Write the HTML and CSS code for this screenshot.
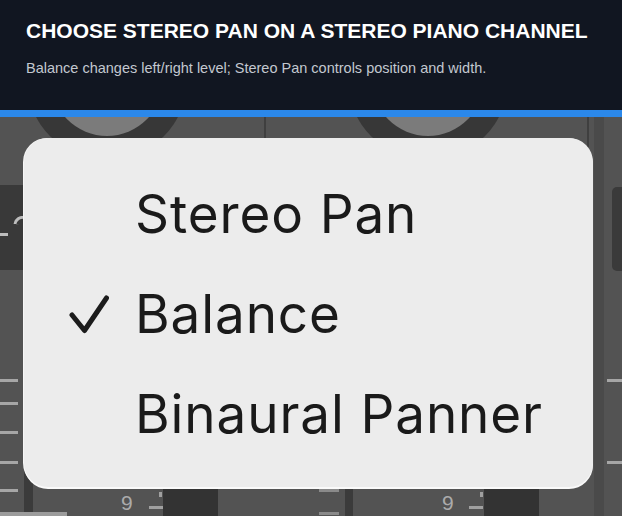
FILE: index.html
```html
<!DOCTYPE html>
<html lang="en">
<head>
<meta charset="utf-8">
<title>Choose Stereo Pan on a stereo piano channel</title>
<link rel="stylesheet" href="styles.css">
</head>
<body>
<header class="header">
  <h1 class="title">CHOOSE STEREO PAN ON A STEREO PIANO CHANNEL</h1>
  <p class="subtitle">Balance changes left/right level; Stereo Pan controls position and width.</p>
</header>
<div class="accent"></div>
<main class="mixer">
  <div class="deco knob knob-a"></div>
  <div class="deco knob knob-b"></div>
  <div class="deco divider divider-a"></div>
  <div class="deco divider divider-b"></div>
  <div class="deco left-panel"><span class="panel-tick"></span><span class="panel-curve"></span></div>
  <div class="deco right-panel"></div>
  <div class="deco tick tick-l1"></div>
  <div class="deco tick tick-l2"></div>
  <div class="deco tick tick-l3"></div>
  <div class="deco tick tick-l4"></div>
  <div class="deco tick tick-l5"></div>
  <div class="deco tick tick-r1"></div>
  <div class="deco tick tick-r2"></div>
  <div class="deco edge-left"></div>
  <div class="deco edge-mid"></div>
  <div class="deco edge-right"></div>
  <div class="deco left-bar"></div>
  <div class="deco fader fader-a"></div>
  <div class="deco fader fader-b"></div>
  <div class="deco scale scale-a">9</div>
  <div class="deco scale scale-b">9</div>
  <div class="deco dash dash-a"></div>
  <div class="deco dash dash-b"></div>
  <div class="deco dot dot-a"></div>
  <div class="deco dot dot-b"></div>
  <div class="deco tick tick-m1"></div>
  <div class="deco tick tick-m2"></div>

  <ul class="menu">
    <li class="item"><span class="check"></span><span class="label">Stereo Pan</span></li>
    <li class="item"><span class="check"><svg width="40" height="40" viewBox="0 0 40 40"><path d="M3 21 L15.5 36.5 L37.5 4" fill="none" stroke="#1c1c1c" stroke-width="5" stroke-linecap="round" stroke-linejoin="round"/></svg></span><span class="label">Balance</span></li>
    <li class="item"><span class="check"></span><span class="label">Binaural Panner</span></li>
  </ul>
</main>
</body>
</html>
```

FILE: styles.css
```css
* { box-sizing: border-box; }
html, body { margin: 0; padding: 0; }
body {
  width: 622px;
  height: 516px;
  overflow: hidden;
  background: #525252;
  font-family: "Liberation Sans", Arial, sans-serif;
}
.header {
  height: 110px;
  background: #111621;
  padding: 18px 26px 0;
}
.title {
  margin: 0;
  font-size: 21px;
  line-height: 25px;
  font-weight: 700;
  color: #ffffff;
}
.subtitle {
  margin: 16px 0 0;
  font-size: 14.5px;
  line-height: 18px;
  color: #c3c8d0;
}
.accent {
  height: 7px;
  background: #2b88ea;
}
.mixer {
  position: relative;
  height: 399px;
  overflow: hidden;
  background: #535353;
  padding: 21px 29px 0 24px;
}
.deco { position: absolute; }
.knob {
  width: 160px;
  height: 160px;
  top: -117px;
  border-radius: 50%;
  background: #373737;
}
.knob::after {
  content: "";
  position: absolute;
  left: 24px;
  top: 24px;
  width: 112px;
  height: 112px;
  border-radius: 50%;
  background: #7b7b7b;
}
.knob-a { left: 27px; }
.knob-b { left: 348px; }
.divider {
  top: 0;
  width: 2px;
  height: 30px;
  background: #3f3f3f;
}
.divider-a { left: 264px; }
.divider-b { left: 587px; }
.left-panel {
  left: 0;
  top: 68px;
  width: 26px;
  height: 85px;
  background: #393939;
}
.panel-tick {
  position: absolute;
  left: 0;
  top: 48px;
  width: 8px;
  height: 3px;
  background: #bdbdbd;
}
.panel-curve {
  position: absolute;
  left: 14px;
  top: 30px;
  width: 10px;
  height: 10px;
  border-top: 3px solid #bdbdbd;
  border-left: 3px solid #bdbdbd;
  border-top-left-radius: 10px;
  transform: rotate(10deg);
}
.right-panel {
  left: 612px;
  top: 70px;
  width: 12px;
  height: 84px;
  border-radius: 5px 0 0 5px;
  background: #3a3a3a;
}
.tick {
  height: 3px;
  background: #a6a6a6;
}
.tick-l1 { left: 0; top: 262px; width: 18px; }
.tick-l2 { left: 0; top: 285px; width: 18px; }
.tick-l3 { left: 0; top: 314px; width: 18px; }
.tick-l4 { left: 0; top: 344px; width: 18px; }
.tick-l5 { left: 0; top: 372px; width: 18px; }
.tick-r1 { left: 607px; top: 262px; width: 15px; }
.tick-r2 { left: 607px; top: 344px; width: 15px; }
.tick-m1 { left: 319px; top: 372px; width: 20px; background: #8a8a8a; }
.tick-m2 { left: 319px; top: 395px; width: 20px; background: #8a8a8a; }
.edge-left {
  left: 24px;
  top: 250px;
  width: 9px;
  height: 149px;
  background: #3b3b3b;
}
.edge-mid {
  left: 345px;
  top: 368px;
  width: 8px;
  height: 31px;
  background: #3b3b3b;
}
.edge-right {
  left: 594px;
  top: 0;
  width: 10px;
  height: 399px;
  background: #4a4a4a;
}
.left-bar {
  left: 0;
  top: 395px;
  width: 67px;
  height: 4px;
  background: #9c9c9c;
}
.fader {
  top: 370px;
  width: 55px;
  height: 29px;
  background: #333333;
}
.fader-a { left: 163px; }
.fader-b { left: 484px; }
.scale {
  top: 374px;
  font-family: "Liberation Sans", Arial, sans-serif;
  font-size: 21px;
  line-height: 24px;
  color: #ababab;
}
.scale-a { left: 121px; }
.scale-b { left: 442px; }
.dash {
  top: 389px;
  width: 14px;
  height: 3px;
  background: #a0a0a0;
}
.dash-a { left: 149px; }
.dash-b { left: 469px; }
.dot {
  top: 375px;
  width: 3px;
  height: 5px;
  background: #a0a0a0;
}
.dot-a { left: 159px; }
.dot-b { left: 480px; }

.menu {
  position: relative;
  z-index: 1;
  list-style: none;
  margin: 0;
  height: 349px;
  padding: 26px 0 0 45px;
  background: #ececec;
  border-radius: 24px;
  box-shadow: 0 2px 0 #fafafa, -1px 0 0 #f6f6f6;
}
.item {
  display: flex;
  align-items: center;
  height: 100px;
}
.check {
  width: 40px;
  height: 40px;
  margin-right: 26px;
  flex: none;
}
.check svg { display: block; }
.label {
  font-family: Inter, "Liberation Sans", sans-serif;
  font-size: 53px;
  line-height: 100px;
  color: #1a1a1a;
  letter-spacing: 0.9px;
}
```
